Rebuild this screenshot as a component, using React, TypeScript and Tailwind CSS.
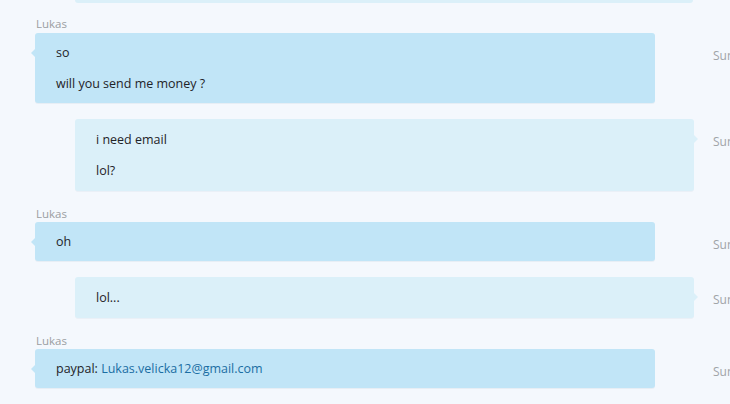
import React from 'react';

type Msg = {
  from: 'them' | 'me';
  lines: React.ReactNode[];
  label?: boolean;
};

const messages: Msg[] = [
  { from: 'them', label: true, lines: ['so', 'will you send me money ?'] },
  { from: 'me', lines: ['i need email', 'lol?'] },
  { from: 'them', label: true, lines: ['oh'] },
  { from: 'me', lines: ['lol...'] },
  {
    from: 'them',
    label: true,
    lines: [
      <>
        paypal: <span className="text-[#1b6ea3]">Lukas.velicka12@gmail.com</span>
      </>,
    ],
  },
];

function Bubble({ msg }: { msg: Msg }) {
  const mine = msg.from === 'me';
  return (
    <div className="flex items-start">
      <div className="w-[713px] shrink-0">
        <div
          className={
            mine
              ? 'relative ml-[75px] w-[619px] rounded-[3px] bg-[#dbf0f9] py-[5px] pl-[21px] shadow-[0_1px_0_rgba(0,60,100,0.04)]'
              : 'relative ml-[35px] w-[620px] rounded-[3px] bg-[#c1e5f7] py-[4px] pl-[21px] shadow-[0_1px_0_rgba(0,60,100,0.05)]'
          }
        >
          {mine ? (
            <span className="absolute right-[-4px] top-[16px] h-0 w-0 border-y-[4px] border-l-[4px] border-y-transparent border-l-[#dbf0f9]" />
          ) : (
            <span className="absolute left-[-4px] top-[16px] h-0 w-0 border-y-[4px] border-r-[4px] border-y-transparent border-r-[#c1e5f7]" />
          )}
          {msg.lines.map((line, i) => (
            <p key={i} className="text-[12.5px] leading-[31px] text-[#1f2328]">
              {line}
            </p>
          ))}
        </div>
      </div>
      <span
        className={
          mine
            ? 'whitespace-nowrap pt-[7px] text-[12px] leading-[31px] text-[#a0a4a8]'
            : 'whitespace-nowrap pt-[7px] text-[12px] leading-[31px] text-[#a0a4a8]'
        }
      >
        Sunday 21:14
      </span>
    </div>
  );
}

export default function App() {
  return (
    <div
      className="h-[404px] w-[730px] overflow-hidden bg-[#f4f8fd]"
      style={{ fontFamily: '"Open Sans", "Noto Sans", sans-serif' }}
    >
      <div className="ml-[75px] h-[3px] w-[618px] rounded-b-[3px] bg-[#dbf0f9]" />
      {messages.map((m, i) => (
        <div key={i} className={i === 0 ? 'mt-[14px]' : 'mt-[16px]'}>
          {m.label && (
            <div
              className={
                i === 0
                  ? 'mb-[2px] ml-[36px] text-[11.5px] leading-[14px] text-[#9b9ea2]'
                  : 'mb-[1px] ml-[36px] text-[11.5px] leading-[14px] text-[#9b9ea2]'
              }
            >
              Lukas
            </div>
          )}
          <Bubble msg={m} />
        </div>
      ))}
    </div>
  );
}
